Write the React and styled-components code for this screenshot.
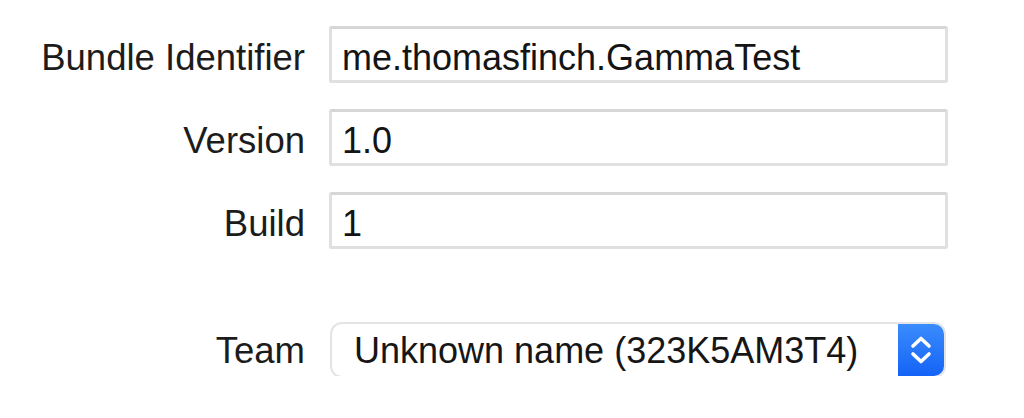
import React from "react";
import styled, { createGlobalStyle } from "styled-components";

const fields = [
  { label: "Bundle Identifier", value: "me.thomasfinch.GammaTest" },
  { label: "Version", value: "1.0" },
  { label: "Build", value: "1" },
];

export default function App() {
  return (
    <>
      <GlobalStyle />
      <StyledForm>
        {fields.map((f) => (
          <React.Fragment key={f.label}>
            <StyledLabel>{f.label}</StyledLabel>
            <StyledField>{f.value}</StyledField>
          </React.Fragment>
        ))}
        <StyledLabel $spaced>Team</StyledLabel>
        <StyledPopup>
          <StyledPopupText>Unknown name (323K5AM3T4)</StyledPopupText>
          <StyledStepper>
            <svg width="22" height="30" viewBox="0 0 22 30" fill="none">
              <path
                d="M3 11 L11 3.5 L19 11"
                stroke="#fff"
                strokeWidth="3.6"
                strokeLinecap="round"
                strokeLinejoin="round"
              />
              <path
                d="M3 19 L11 26.5 L19 19"
                stroke="#fff"
                strokeWidth="3.6"
                strokeLinecap="round"
                strokeLinejoin="round"
              />
            </svg>
          </StyledStepper>
        </StyledPopup>
      </StyledForm>
    </>
  );
}

const GlobalStyle = createGlobalStyle`
  html, body {
    margin: 0;
    padding: 0;
    background: #ffffff;
  }
  body {
    font-family: "Liberation Sans", Arial, sans-serif;
    color: #1a1a1a;
  }
`;

const StyledForm = styled.div`
  display: grid;
  grid-template-columns: 305px 619px;
  column-gap: 24px;
  row-gap: 26px;
  align-items: baseline;
  padding-top: 26px;
`;

const StyledLabel = styled.div`
  justify-self: end;
  font-size: 36.5px;
  color: #1c1c1c;
  margin-top: ${(p) => (p.$spaced ? "49px" : "0")};
`;

const StyledField = styled.div`
  box-sizing: border-box;
  height: 57px;
  border: 3px solid #e0e0e0;
  border-top-color: #d6d6d6;
  border-radius: 3px;
  padding: 6px 10px 0;
  line-height: 45px;
  font-size: 36px;
  color: #141414;
  background: #fff;
`;

const StyledPopup = styled.div`
  box-sizing: border-box;
  margin-top: 49px;
  margin-left: 3px;
  width: 612px;
  height: 52px;
  display: flex;
  align-items: stretch;
  border-radius: 10px;
  background: #fff;
  box-shadow: 0 0 0 2px #e4e4e4, 0 2px 1px #cccccc;
`;

const StyledPopupText = styled.div`
  flex: 1;
  padding: 3px 0 0 22px;
  line-height: 47px;
  font-size: 36px;
  color: #161616;
`;

const StyledStepper = styled.div`
  width: 46px;
  display: flex;
  align-items: center;
  justify-content: center;
  border-radius: 0 10px 10px 0;
  background: linear-gradient(#3b8cfd, #1463f6);
`;
